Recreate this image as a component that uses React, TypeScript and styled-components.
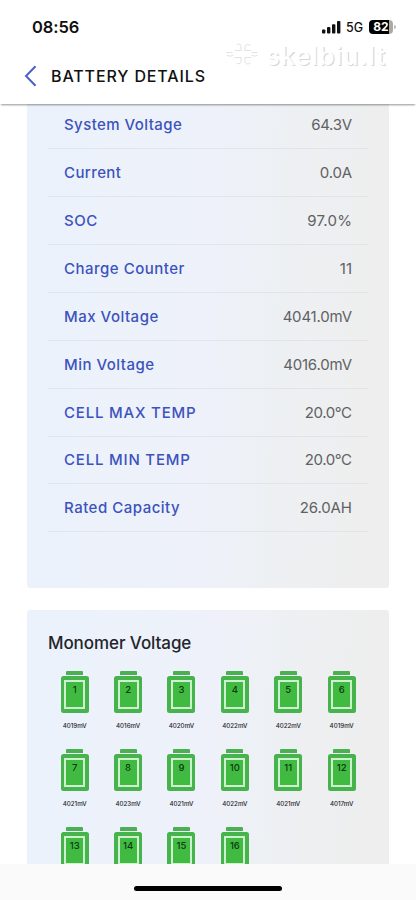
import React from "react";
import styled, { createGlobalStyle } from "styled-components";

const GlobalStyle = createGlobalStyle`
  * { box-sizing: border-box; }
  body { margin: 0; background: #fff; font-family: Inter, "Liberation Sans", sans-serif; }
`;

const Screen = styled.div`
  width: 416px;
  height: 900px;
  overflow: hidden;
  display: flex;
  flex-direction: column;
  background: #fff;
`;

const Header = styled.header`
  position: relative;
  z-index: 1;
  flex: none;
  height: 104px;
  background: #fff;
  box-shadow: 0 2px 2px -1px rgba(0, 0, 0, 0.42);
`;

const StatusBar = styled.div`
  height: 52px;
  padding: 2px 20px 0 32px;
  display: flex;
  align-items: center;
  justify-content: space-between;
`;

const Clock = styled.span`
  font-size: 16.5px;
  font-weight: 600;
  letter-spacing: -0.1px;
  color: #111;
`;

const StatusIcons = styled.div`
  display: flex;
  align-items: center;
`;

const Network = styled.span`
  margin: 1px 0 0 5px;
  width: 18px;
  font-size: 12.5px;
  font-weight: 500;
  color: #111;
`;

const Charge = styled.div`
  margin-left: 5px;
  width: 24px;
  height: 14px;
  border-radius: 4px;
  background: linear-gradient(90deg, #000 84%, #aaa 84%);
  color: #fff;
  font-size: 12px;
  font-weight: 700;
  line-height: 14px;
  text-align: center;
`;

const ChargeTip = styled.div`
  width: 2px;
  height: 4px;
  margin-left: 1px;
  border-radius: 0 2px 2px 0;
  background: #bbb;
`;

const TitleBar = styled.div`
  height: 48px;
  padding-left: 24px;
  display: flex;
  align-items: center;
`;

const Title = styled.h1`
  margin: 0 0 0 14px;
  font-size: 16px;
  font-weight: 500;
  line-height: 20px;
  letter-spacing: 0.88px;
  color: #111;
  white-space: nowrap;
`;

const Watermark = styled.div`
  position: absolute;
  left: 224px;
  top: 40px;
`;

const Content = styled.main`
  flex: none;
  height: 760px;
  overflow: hidden;
  padding: 0 27px;
`;

const Panel = styled.section<{ $height: number; $first?: boolean }>`
  height: ${(p) => p.$height}px;
  margin-bottom: 22px;
  padding: 0 21px;
  border-radius: ${(p) => (p.$first ? "0 0 3px 3px" : "3px")};
  background: linear-gradient(93deg, #ebf2fc 0%, #eef1f9 50%, #edf0f3 68%, #eeeeee 92%);
`;

const Row = styled.div<{ $height: number }>`
  height: ${(p) => p.$height}px;
  padding: 0 16px 13px;
  display: flex;
  align-items: flex-end;
  justify-content: space-between;
  border-bottom: 1px solid #e2e4e9;
  font-size: 15px;
  line-height: 20px;
  white-space: nowrap;
`;

const Label = styled.span<{ $spacing: number }>`
  color: #3c53bd;
  font-weight: 500;
  letter-spacing: ${(p) => p.$spacing}px;
`;

const Value = styled.span<{ $spacing: number }>`
  color: #606165;
  letter-spacing: ${(p) => p.$spacing}px;
  margin-right: ${(p) => -p.$spacing}px;
`;

const PanelTitle = styled.h2`
  margin: 0;
  padding-top: 22px;
  height: 61px;
  font-size: 17px;
  line-height: 22px;
  font-weight: 450;
  letter-spacing: -0.08px;
  color: #23252b;
`;

const CellGrid = styled.div`
  display: grid;
  grid-template-columns: repeat(6, 53.4px);
  grid-auto-rows: 78px;
`;

const Cell = styled.div`
  display: flex;
  flex-direction: column;
  align-items: center;
`;

const Cap = styled.div`
  width: 17px;
  height: 4px;
  margin-bottom: 1px;
  border-radius: 1px 1px 0 0;
  background: #4bb052;
`;

const Body = styled.div`
  width: 28px;
  height: 37px;
  padding: 4px 3.5px;
  border-radius: 2.5px;
  background: #46b34c;
`;

const Charged = styled.div`
  height: 29px;
  border: 2px solid #cdf0cf;
  background: #41ba41;
  font-size: 9.5px;
  font-weight: 500;
  line-height: 15px;
  text-align: center;
  color: #0b3b12;
`;

const CellVoltage = styled.span`
  margin-top: 8px;
  font-size: 6.2px;
  line-height: 10px;
  font-weight: 500;
  color: #24262b;
`;

const Footer = styled.footer`
  flex: none;
  height: 36px;
  display: flex;
  justify-content: center;
  padding-top: 22px;
  background: #fafafa;
`;

const HomeIndicator = styled.div`
  width: 148px;
  height: 5px;
  border-radius: 3px;
  background: #000;
`;

const readings: [string, string, number, number, number][] = [
  ["System Voltage", "64.3V", 45, 0.43, -0.3],
  ["Current", "0.0A", 48, 0.4, -0.2],
  ["SOC", "97.0%", 48, 0.5, 0.25],
  ["Charge Counter", "11", 48, 0.5, 0],
  ["Max Voltage", "4041.0mV", 48, 0.5, -0.2],
  ["Min Voltage", "4016.0mV", 48, 0.5, -0.2],
  ["CELL MAX TEMP", "20.0°C", 48, 0.8, -0.4],
  ["CELL MIN TEMP", "20.0°C", 47, 0.8, -0.4],
  ["Rated Capacity", "26.0AH", 48, 0.5, -0.1],
];

const cells: (number | null)[] = [
  4019, 4016, 4020, 4022, 4022, 4019, 4021, 4023, 4021, 4022, 4021, 4017, null, null, null, null,
];

export default function App() {
  return (
    <>
      <GlobalStyle />
      <Screen>
        <Header>
          <StatusBar>
            <Clock>08:56</Clock>
            <StatusIcons>
              <svg width="19" height="13" viewBox="0 0 19 13" fill="#111">
                <rect x="0" y="8.5" width="3.4" height="4" rx="0.9" />
                <rect x="5" y="6" width="3.4" height="6.5" rx="0.9" />
                <rect x="10" y="3.2" width="3.4" height="9.3" rx="0.9" />
                <rect x="15" y="0" width="3.4" height="12.5" rx="0.9" />
              </svg>
              <Network>5G</Network>
              <Charge>82</Charge>
              <ChargeTip />
            </StatusIcons>
          </StatusBar>
          <Watermark>
            <svg width="166" height="34" viewBox="0 0 166 34">
              <g fill="none" stroke="#e2e2e2" strokeWidth="1" strokeLinecap="round">
                <path d="M3 12.5 h5 M28 12.5 h5 M13 4.5 q3 -1.5 4 1 v5 M21 10 v-4 q2 -3 5 -1" />
                <path d="M11 10.5 h6 M21 10.5 h6 M11 17.5 h6 M21 17.5 h6" />
                <path d="M17 17.5 v5 q-2 2.5 -4 1 M26 23.5 q-4 1.5 -5 -1.5 v-4 M3 15.5 q3 1.5 6 0 M28 15.5 q3 1.5 5 0" />
              </g>
              <g fontFamily="Inter, sans-serif" fontSize="25" fontWeight="500">
                <text x="43.2" y="25.6" textLength="119" fill="#d8d8d8">
                  skelbiu.lt
                </text>
                <text x="42" y="24.8" textLength="119" fill="#fff" aria-hidden="true">
                  skelbiu.lt
                </text>
              </g>
            </svg>
          </Watermark>
          <TitleBar>
            <svg width="13" height="22" viewBox="0 0 13 22" fill="none">
              <path d="M11.5 1.2 L2 11 L11.5 20.8" stroke="#4a62c8" strokeWidth="2" />
            </svg>
            <Title>BATTERY DETAILS</Title>
          </TitleBar>
        </Header>
        <Content>
          <Panel $height={484} $first>
            {readings.map(([label, value, height, ls, vs]) => (
              <Row key={label} $height={height}>
                <Label $spacing={ls}>{label}</Label>
                <Value $spacing={vs}>{value}</Value>
              </Row>
            ))}
          </Panel>
          <Panel $height={330}>
            <PanelTitle>Monomer Voltage</PanelTitle>
            <CellGrid>
              {cells.map((mv, i) => (
                <Cell key={i}>
                  <Cap />
                  <Body>
                    <Charged>{i + 1}</Charged>
                  </Body>
                  {mv !== null && <CellVoltage>{mv}mV</CellVoltage>}
                </Cell>
              ))}
            </CellGrid>
          </Panel>
        </Content>
        <Footer>
          <HomeIndicator />
        </Footer>
      </Screen>
    </>
  );
}
